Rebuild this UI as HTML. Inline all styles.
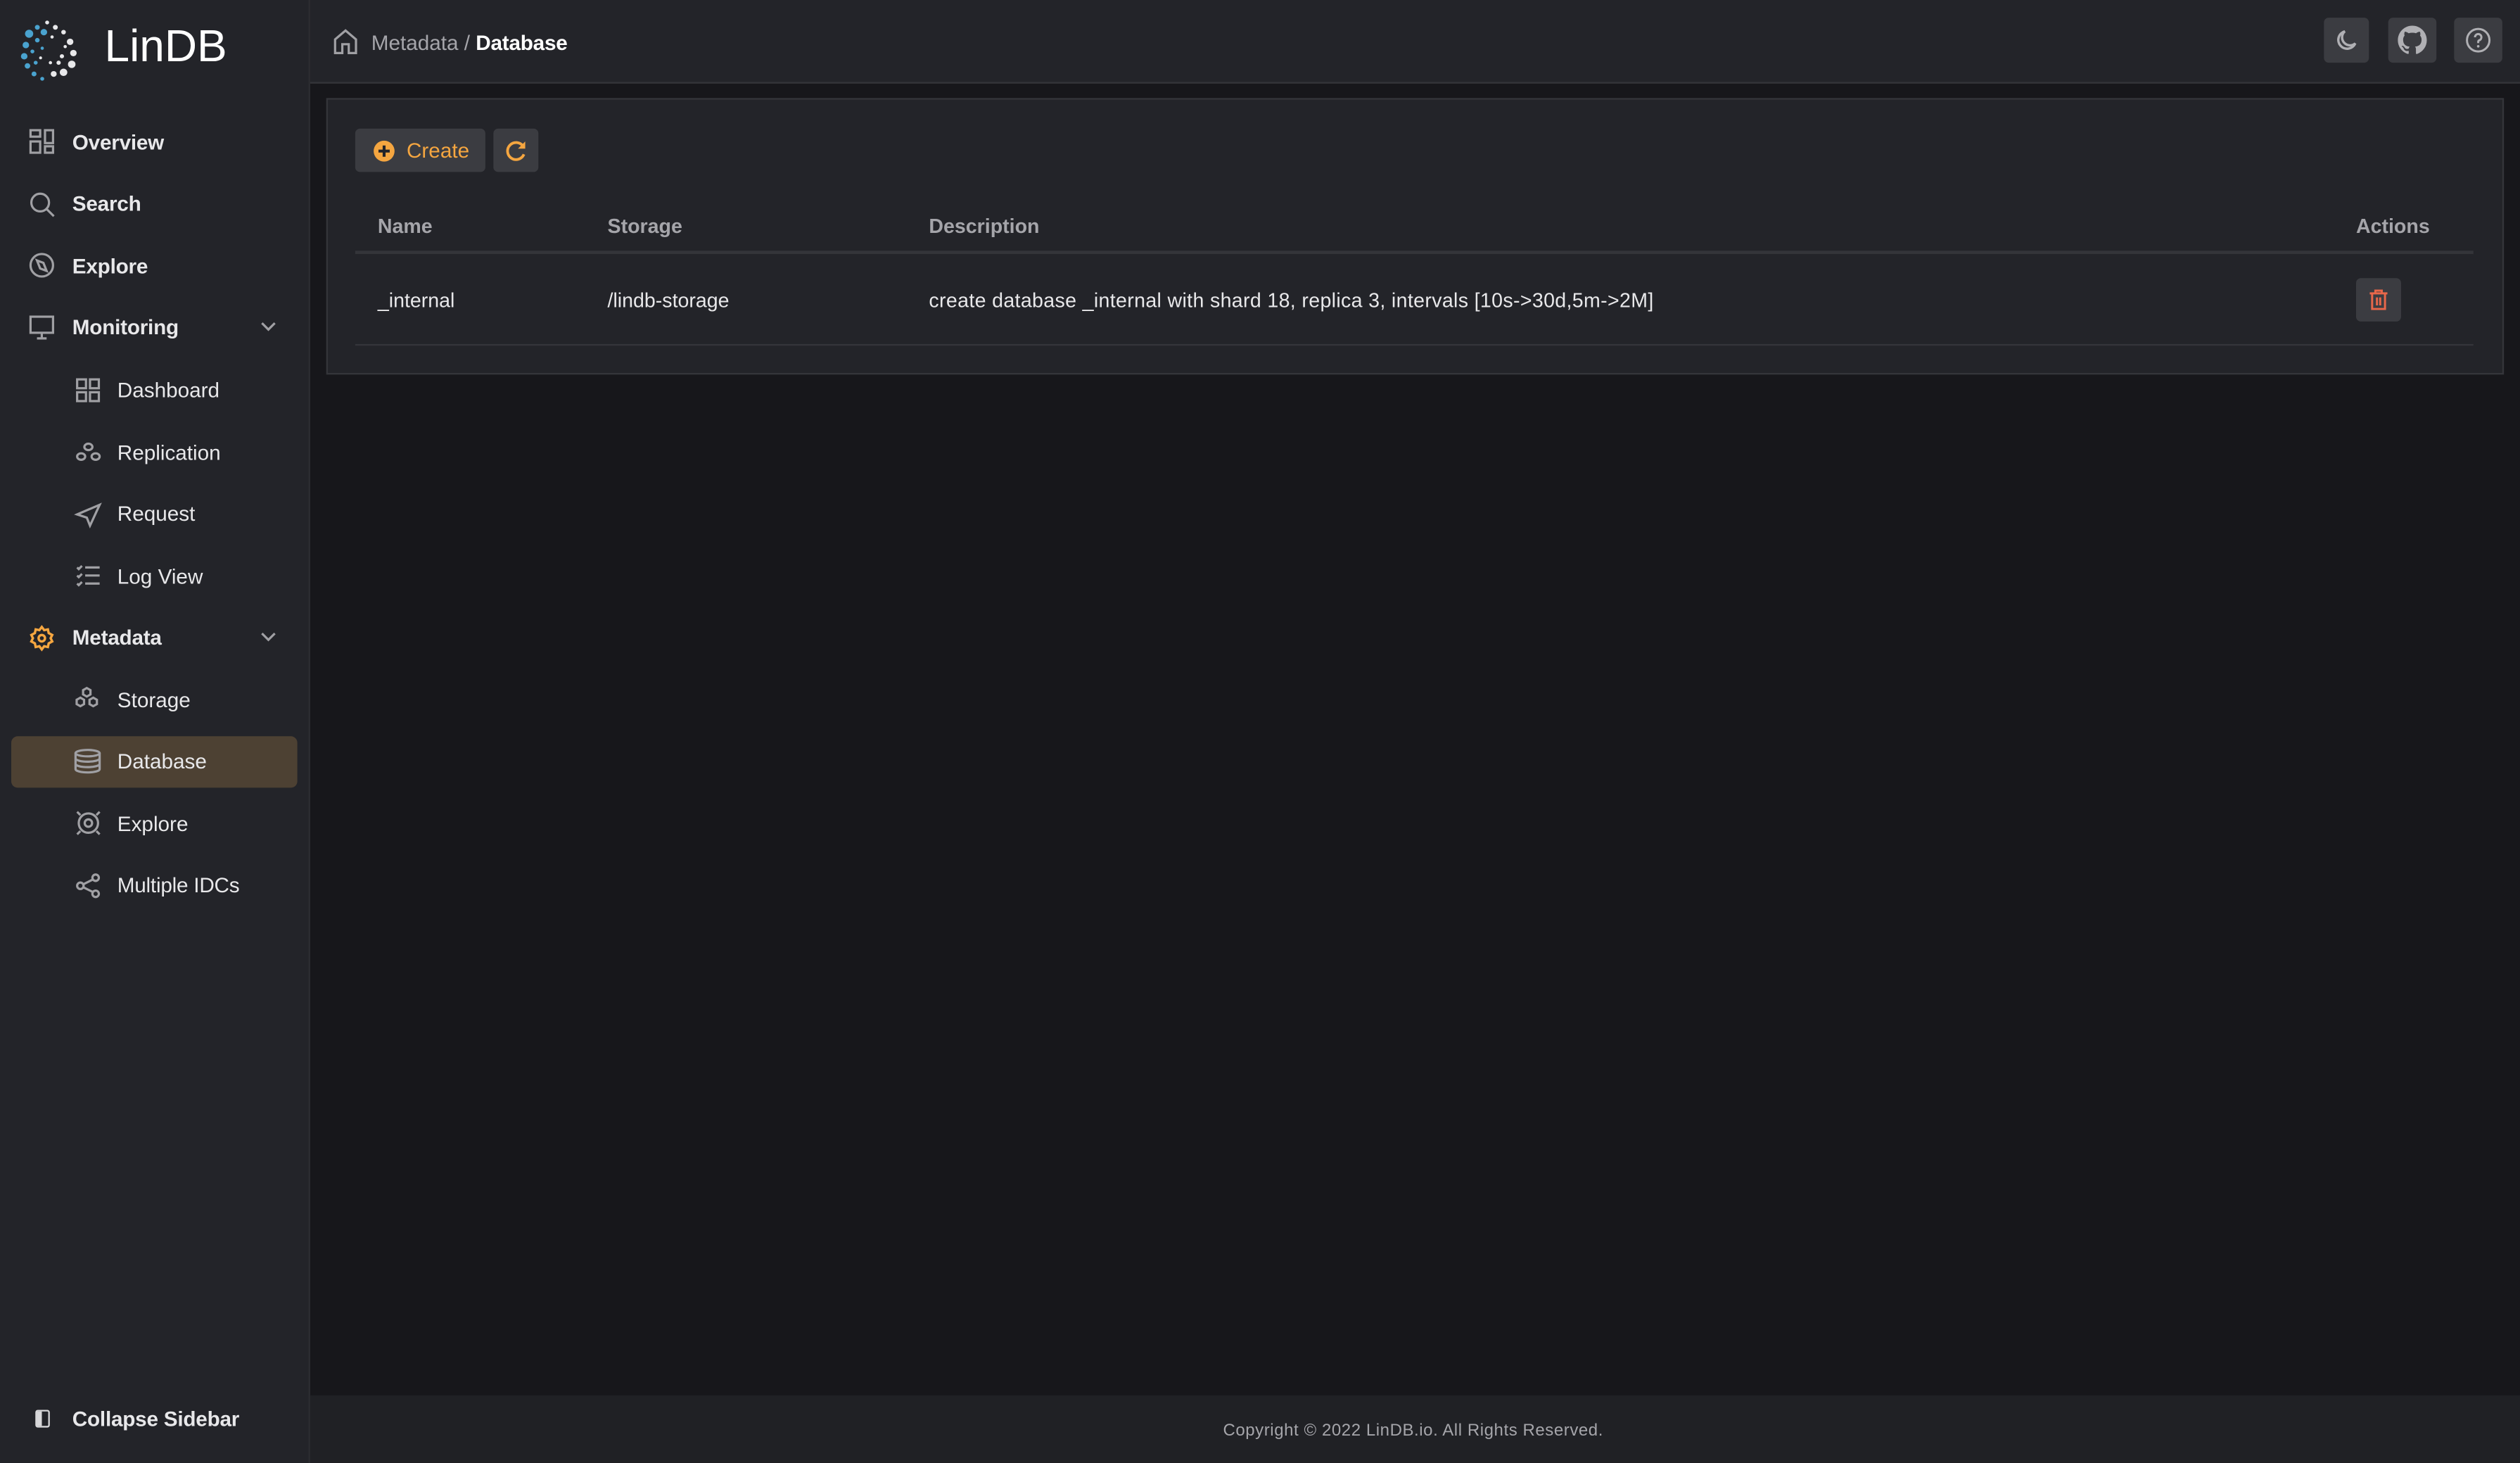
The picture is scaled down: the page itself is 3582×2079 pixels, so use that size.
<!DOCTYPE html>
<html><head><meta charset="utf-8"><style>
html,body{margin:0;padding:0;background:#17171b;overflow:hidden;width:3582px;height:2078px}
#s{position:absolute;left:0;top:0;width:1568px;height:910px;transform:scale(2.28444);transform-origin:0 0;font-family:"Liberation Sans",sans-serif;color:#e8e8ea;background:#17171b}
.a{position:absolute}
.sb{left:0;top:0;width:192px;height:910px;background:#232429;border-right:1px solid #2c2d31}
.it{position:absolute;font-size:13px;white-space:nowrap}
.b{font-weight:700;letter-spacing:-0.1px}
svg{position:absolute;overflow:visible}
.ic{stroke:#a0a0a4;fill:none;stroke-width:1.4}
.btn{position:absolute;background:#3b3c41;border-radius:3px}
.th{position:absolute;top:134px;font-size:12.5px;color:#a5a5aa;font-weight:700}
.td{position:absolute;top:180px;font-size:12.5px;color:#e8e8ea}
</style></head><body><div id="s">
<div class="a sb"></div>
<!-- logo -->
<svg style="left:9px;top:11px" width="42" height="40" viewBox="0 0 36 40">
<g transform="scale(1.02,1)">
<g fill="#4aa3cf"><circle cx="6" cy="10" r="2.5"/><circle cx="4" cy="17" r="2"/><circle cx="3" cy="24" r="2"/><circle cx="5" cy="30" r="1.7"/><circle cx="9" cy="35" r="1.5"/><circle cx="14" cy="38" r="1.2"/><circle cx="11" cy="6" r="1.5"/><circle cx="11" cy="14" r="1.4"/><circle cx="8" cy="21" r="1.2"/><circle cx="10" cy="28" r="1.2"/><circle cx="15" cy="9" r="2"/><circle cx="14" cy="19" r="1"/></g>
<g fill="#e8e8ea"><circle cx="17" cy="3" r="1.2"/><circle cx="22" cy="6" r="1.5"/><circle cx="27" cy="9" r="1.4"/><circle cx="31" cy="15" r="2"/><circle cx="33" cy="22" r="2"/><circle cx="32" cy="29" r="2.3"/><circle cx="27" cy="34" r="2.3"/><circle cx="21" cy="35" r="1.8"/><circle cx="26" cy="24" r="1.3"/><circle cx="24" cy="28" r="1.3"/><circle cx="19" cy="28" r="1"/><circle cx="28" cy="18" r="1"/><circle cx="20" cy="12" r="1"/><circle cx="13" cy="25" r="0.9"/></g>
</g>
</svg>
<div class="it" style="left:65px;top:13px;font-size:28px;font-weight:400;color:#fff">LinDB</div>
<!-- main menu -->
<svg style="left:18px;top:80px" width="16" height="16"><g class="ic"><rect x="1" y="1" width="6" height="4"/><rect x="1" y="8" width="6" height="7"/><rect x="10" y="1" width="5" height="8"/><rect x="10" y="11" width="5" height="4"/></g></svg>
<div class="it b" style="left:45px;top:81px">Overview</div>
<svg style="left:18px;top:119px" width="16" height="16"><g class="ic"><circle cx="7" cy="7" r="5.5"/><path d="M11 11l4.5 4.5"/></g></svg>
<div class="it b" style="left:45px;top:119px">Search</div>
<svg style="left:18px;top:157px" width="16" height="16"><g class="ic"><circle cx="8" cy="8" r="7"/><path d="M5 5l4 1.5 2 5-4-1.5z"/></g></svg>
<div class="it b" style="left:45px;top:158px">Explore</div>
<svg style="left:18px;top:196px" width="16" height="16"><g class="ic"><rect x="1" y="1" width="14" height="10"/><path d="M8 11v3M5 14.5h6"/></g></svg>
<div class="it b" style="left:45px;top:196px">Monitoring</div>
<svg style="left:162px;top:200px" width="10" height="7"><path d="M1 1l4 4 4-4" class="ic"/></svg>
<svg style="left:47px;top:235px" width="16" height="16"><g class="ic"><rect x="1" y="1" width="5.5" height="5.5"/><rect x="9" y="1" width="5.5" height="5.5"/><rect x="1" y="9" width="5.5" height="5.5"/><rect x="9" y="9" width="5.5" height="5.5"/></g></svg>
<div class="it" style="left:73px;top:235px">Dashboard</div>
<svg style="left:47px;top:274px" width="16" height="16"><g class="ic"><ellipse cx="8" cy="4" rx="2.5" ry="2"/><ellipse cx="3.5" cy="10" rx="2.5" ry="2"/><ellipse cx="12.5" cy="10" rx="2.5" ry="2"/></g></svg>
<div class="it" style="left:73px;top:274px">Replication</div>
<svg style="left:47px;top:312px" width="16" height="16"><path class="ic" d="M1 8l14-6-6 13-2-5z"/></svg>
<div class="it" style="left:73px;top:312px">Request</div>
<svg style="left:47px;top:350px" width="16" height="16"><g class="ic"><path d="M1 3l1 1 2-2M1 8l1 1 2-2M1 13l1 1 2-2M6 3h9M6 8h9M6 13h9"/></g></svg>
<div class="it" style="left:73px;top:351px">Log View</div>
<svg style="left:18px;top:389px" width="16" height="16"><g stroke="#f5a640" fill="none" stroke-width="1.5"><path d="M8 1l1.5 2 2.3-.5.5 2.3 2.2 1.2-1 2 1 2-2.2 1.2-.5 2.3-2.3-.5L8 15l-1.5-2-2.3.5-.5-2.3L1.5 10l1-2-1-2 2.2-1.2.5-2.3 2.3.5z"/><circle cx="8" cy="8" r="2"/></g></svg>
<div class="it b" style="left:45px;top:389px">Metadata</div>
<svg style="left:162px;top:393px" width="10" height="7"><path d="M1 1l4 4 4-4" class="ic"/></svg>
<svg style="left:46px;top:427px" width="16" height="16"><g class="ic"><path d="M8 1l2.3 1.3v2.7L8 6.3 5.7 5V2.3zM4 7l2.3 1.3V11L4 12.3 1.7 11V8.3zM12 7l2.3 1.3V11L12 12.3 9.7 11V8.3z"/></g></svg>
<div class="it" style="left:73px;top:428px">Storage</div>
<div class="a" style="left:7px;top:458px;width:178px;height:32px;background:#4d4133;border-radius:4px"></div>
<svg style="left:46px;top:466px" width="17" height="16"><g class="ic"><ellipse cx="8.5" cy="2.5" rx="7.5" ry="2"/><path d="M1 2.5v10c0 1.1 3.4 2 7.5 2s7.5-.9 7.5-2v-10M1 5.8c0 1.1 3.4 2 7.5 2s7.5-.9 7.5-2M1 9.2c0 1.1 3.4 2 7.5 2s7.5-.9 7.5-2"/></g></svg>
<div class="it" style="left:73px;top:466px">Database</div>
<svg style="left:47px;top:504px" width="16" height="16"><g class="ic"><circle cx="8" cy="8" r="6"/><circle cx="8" cy="8" r="2.3"/><path d="M1 1l2 2M15 1l-2 2M1 15l2-2M15 15l-2-2"/></g></svg>
<div class="it" style="left:73px;top:505px">Explore</div>
<svg style="left:47px;top:543px" width="16" height="16"><g class="ic"><circle cx="3" cy="8" r="2"/><circle cx="12.5" cy="3" r="2"/><circle cx="12.5" cy="13" r="2"/><path d="M5 7l6-3M5 9l6 3"/></g></svg>
<div class="it" style="left:73px;top:543px;letter-spacing:-0.1px">Multiple IDCs</div>
<div class="a" style="left:22px;top:877px;width:9px;height:11px;border:1.5px solid #d8d8da;border-radius:1.5px;box-sizing:border-box;background:linear-gradient(90deg,#d8d8da 45%,transparent 45%)"></div>
<div class="it b" style="left:45px;top:875px">Collapse Sidebar</div>
<!-- header -->
<div class="a" style="left:193px;top:0;width:1375px;height:51px;background:#232429;border-bottom:1px solid #34353a"></div>
<svg style="left:207px;top:18px" width="16" height="16"><path class="ic" d="M1.5 15V6.5L8 1l6.5 5.5V15H10V9.5H6V15z"/></svg>
<div class="it" style="left:231px;top:19px;color:#a5a5aa">Metadata / <span style="color:#fff;font-weight:700;letter-spacing:-0.1px">Database</span></div>
<div class="btn" style="left:1446px;top:11px;width:28px;height:28px"></div>
<svg style="left:1453px;top:18px" width="14" height="14"><path fill="none" stroke="#b0b0b4" stroke-width="1.5" d="M6 1.5A5.5 5.5 0 1 0 12.5 9 4.5 4.5 0 0 1 6 1.5z"/></svg>
<div class="btn" style="left:1486px;top:11px;width:30px;height:28px"></div>
<svg style="left:1492px;top:16px" width="18" height="18" viewBox="0 0 16 16"><path fill="#b0b0b4" d="M8 0C3.58 0 0 3.58 0 8c0 3.54 2.29 6.53 5.47 7.590.4.07.55-.17.55-.38v-1.34c-2.23.48-2.7-1.070-2.7-1.07-.36-.92-.89-1.17-.89-1.17-.73-.5.05-.49.05-.49.8.06 1.23.83 1.23.83.72 1.22 1.87.87 2.33.66.07-.52.28-.87.51-1.07-1.78-.2-3.64-.89-3.64-3.95 0-.87.31-1.59.82-2.15-.08-.2-.36-1.02.08-2.120 0 0 .67-.21 2.2.82a7.6 7.6 0 0 1 4 0c1.530-1.04 2.2-.82 2.2-.82.44 1.1.16 1.92.08 2.12.51.56.82 1.27.82 2.15 0 3.07-1.87 3.75-3.65 3.95.29.25.54.73.54 1.48v2.2c0 .21.15.46.55.38A8 8 0 0 0 16 8c0-4.42-3.58-8-8-8z"/></svg>
<div class="btn" style="left:1527px;top:11px;width:30px;height:28px"></div>
<svg style="left:1534px;top:17px" width="16" height="16"><g fill="none" stroke="#b0b0b4" stroke-width="1.3"><circle cx="8" cy="8" r="7"/><path d="M6 6.2a2 2 0 1 1 2.5 1.9c-.4.2-.5.5-.5 1v.7"/></g><circle cx="8" cy="11.8" r=".8" fill="#b0b0b4"/></svg>
<!-- panel -->
<div class="a" style="left:203px;top:61px;width:1355px;height:172px;background:#232429;border:1px solid #34353a;box-sizing:border-box"></div>
<div class="btn" style="left:221px;top:80px;width:81px;height:27px"></div>
<svg style="left:232px;top:87px" width="14" height="14"><circle cx="7" cy="7" r="6.5" fill="#f5a640"/><path d="M7 3.5v7M3.5 7h7" stroke="#232429" stroke-width="1.8"/></svg>
<div class="it" style="left:253px;top:86px;color:#f5a640;font-weight:500">Create</div>
<div class="btn" style="left:307px;top:80px;width:28px;height:27px"></div>
<svg style="left:314px;top:87px" width="14" height="14"><path fill="none" stroke="#f5a640" stroke-width="1.7" d="M11.5 4A5.3 5.3 0 1 0 12 9"/><path fill="#f5a640" d="M12.8 1v4.5H8.3z"/></svg>
<div class="th" style="left:235px">Name</div>
<div class="th" style="left:378px">Storage</div>
<div class="th" style="left:578px">Description</div>
<div class="th" style="left:1466px">Actions</div>
<div class="a" style="left:221px;top:156px;width:1318px;height:2px;background:#34353a"></div>
<div class="td" style="left:235px">_internal</div>
<div class="td" style="left:378px">/lindb-storage</div>
<div class="td" style="left:578px;letter-spacing:0.15px">create database _internal with shard 18, replica 3, intervals [10s-&gt;30d,5m-&gt;2M]</div>
<div class="btn" style="left:1466px;top:173px;width:28px;height:27px"></div>
<svg style="left:1474px;top:180px" width="12" height="13"><g fill="none" stroke="#e8674a" stroke-width="1.3"><path d="M0.5 2.5h11M4 2.5V.8h4v1.7M2 2.5v9.7h8V2.5M5 5v5M7 5v5"/></g></svg>
<div class="a" style="left:221px;top:214px;width:1318px;height:1px;background:#34353a"></div>
<!-- footer -->
<div class="a" style="left:193px;top:868px;width:1375px;height:42px;background:#202125"></div>
<div class="it" style="left:761px;top:884px;font-size:10.5px;color:#a5a5aa;letter-spacing:0.25px">Copyright © 2022 LinDB.io. All Rights Reserved.</div>
</div></body></html>
